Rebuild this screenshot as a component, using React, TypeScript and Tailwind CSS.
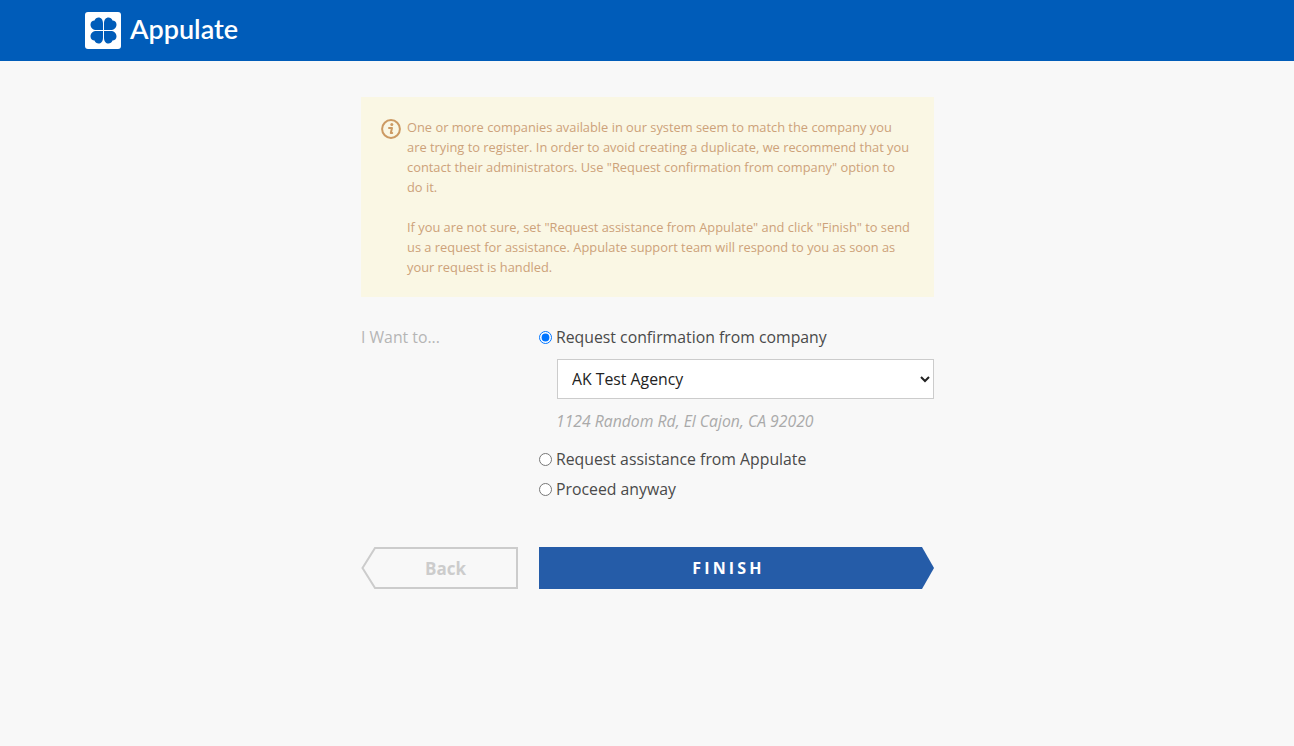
const sans = "font-['Open_Sans','Liberation_Sans',sans-serif]";

function CloverLogo() {
  return (
    <div className="flex h-[37px] w-[36px] items-center justify-center rounded-[3px] bg-white">
      <svg width="27" height="27" viewBox="0 0 27 27" fill="#005cb9">
        <path d="M13 13H6.500C3 13 .5 11 .5 7.500 .5 5 2.500 3.500 4.500 3.500 5 1.500 7 .5 8.500 .5 11 .5 13 2.500 13 6.500Z" />
        <path d="M14 13h6.500c3.500 0 6-2 6-5.500 0-2.500-2-4-4-4C22 1.500 20 .5 18.500 .5 16 .5 14 2.500 14 6.500Z" />
        <path d="M13 14H6.500c-3.500 0-6 2-6 5.500 0 2.500 2 4 4 4 .5 2 2.500 3 4 3 2.500 0 4.500-2 4.500-6Z" />
        <path d="M14 14h6.500c3.500 0 6 2 6 5.500 0 2.500-2 4-4 4-.5 2-2.500 3-4 3-2.500 0-4.500-2-4.500-6Z" />
      </svg>
    </div>
  );
}

function InfoIcon() {
  return (
    <svg width="20" height="20" viewBox="0 0 20 20" fill="none" className="shrink-0">
      <circle cx="10" cy="10" r="8.900" stroke="#cc9a63" strokeWidth="2" />
      <circle cx="10.800" cy="5.600" r="1.500" fill="#cc9a63" />
      <path d="M8 9h3l-1.200 5h1.400" stroke="#cc9a63" strokeWidth="2" strokeLinecap="round" strokeLinejoin="round" />
    </svg>
  );
}

function RadioRow({ label, checked }: { label: string; checked?: boolean }) {
  return (
    <label className="flex h-[30px] items-center text-[15.800px] text-[#4a4a4a]">
      <input type="radio" name="want" defaultChecked={checked} className="m-0 mr-[4px] h-[13px] w-[13px]" />
      <span className="pt-[2px]">{label}</span>
    </label>
  );
}

export default function App() {
  return (
    <div className={`min-h-[746px] bg-[#f8f8f8] ${sans}`}>
      <header className="flex h-[61px] items-center bg-[#005cb9] pb-[1px] pl-[85px]">
        <CloverLogo />
        <span className="ml-[9px] pb-[3px] font-['Lato',sans-serif] text-[27px] font-semibold leading-none text-white">Appulate</span>
      </header>

      <main className="ml-[361px] w-[573px] pt-[36px]">
        <div className="flex gap-[6px] bg-[#faf7e4] pt-[20px] pr-[22px] pb-[20px] pl-[20px] text-[12.850px] leading-[20px] text-[#cda27a]">
          <div className="pt-[2px]">
            <InfoIcon />
          </div>
          <div>
            <p>
              One or more companies available in our system seem to match the company you are trying to register. In order to avoid creating a duplicate, we recommend that you contact their administrators. Use "Request confirmation from company" option to do it.
            </p>
            <p className="mt-[20px]">
              If you are not sure, set "Request assistance from Appulate" and click "Finish" to send us a request for assistance. Appulate support team will respond to you as soon as your request is handled.
            </p>
          </div>
        </div>

        <div className="mt-[25px] flex">
          <div className="w-[178px] pt-[5px] text-[15.800px] leading-[20px] text-[#b5b5b5]">I Want to...</div>
          <div className="flex-1">
            <RadioRow label="Request confirmation from company" checked />
            <div className="ml-[18px] mt-[7px]">
              <select className="h-[40px] w-full border border-[#ccc] bg-white pl-[10px] text-[15.800px] text-[#222] outline-none">
                <option>AK Test Agency</option>
              </select>
              <div className="-ml-[1px] mt-[12px] text-[15.750px] italic leading-[20px] text-[#aaa]">1124 Random Rd, El Cajon, CA 92020</div>
            </div>
            <div className="mt-[13px]">
              <RadioRow label="Request assistance from Appulate" />
              <RadioRow label="Proceed anyway" />
            </div>
          </div>
        </div>

        <div className="mt-[43px] flex gap-[21px]">
          <button className="relative h-[42px] w-[157px] pl-[12px] pt-[2px] text-[17px] font-bold text-[#ccc]">
            <svg width="157" height="42" viewBox="0 0 157 42" fill="none" className="absolute left-0 top-0">
              <path d="M156 1H14L1.500 21 14 41H156Z" stroke="#ccc" strokeWidth="2" />
            </svg>
            <span className="relative">Back</span>
          </button>
          <button className="h-[42px] flex-1 bg-[#255ca8] pr-[16px] text-[16px] font-bold tracking-[3.200px] text-white [clip-path:polygon(0_0,calc(100%-12px)_0,100%_50%,calc(100%-12px)_100%,0_100%)]">
            FINISH
          </button>
        </div>
      </main>
    </div>
  );
}
